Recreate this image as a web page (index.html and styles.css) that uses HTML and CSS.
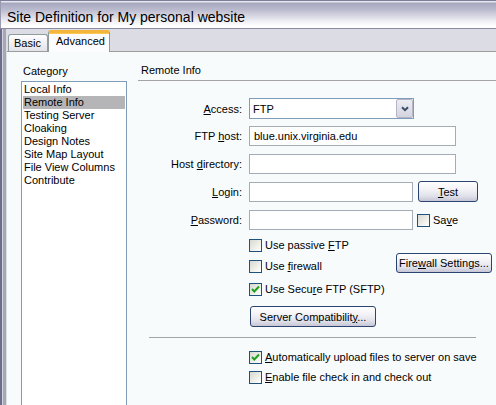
FILE: index.html
```html
<!DOCTYPE html>
<html>
<head>
<meta charset="utf-8">
<link rel="stylesheet" href="styles.css">
</head>
<body>
<div class="window">
  <div class="titlebar">Site Definition for My personal website</div>
  <div class="frame">
    <div class="tabs">
      <div class="tab">Basic</div>
      <div class="tab active">Advanced</div>
    </div>
    <div class="panel">
      <div class="side">
        <div class="side-label">Category</div>
        <ul class="listbox">
          <li>Local Info</li>
          <li class="sel">Remote Info</li>
          <li>Testing Server</li>
          <li>Cloaking</li>
          <li>Design Notes</li>
          <li>Site Map Layout</li>
          <li>File View Columns</li>
          <li>Contribute</li>
        </ul>
      </div>
      <div class="main">
        <div class="section-title">Remote Info</div>
        <div class="form">
          <div class="row row-access">
            <span class="lbl"><u>A</u>ccess:</span>
            <div class="select"><span>FTP</span><span class="arrow"><svg width="8" height="6" viewBox="0 0 8 6"><path d="M1 1.2 L4 4.2 L7 1.2" fill="none" stroke="#3c4c6c" stroke-width="2"/></svg></span></div>
          </div>
          <div class="row row-gap7">
            <span class="lbl">FTP <u>h</u>ost:</span>
            <input class="input wide" type="text" value="blue.unix.virginia.edu">
          </div>
          <div class="row row-gap8">
            <span class="lbl">Host <u>d</u>irectory:</span>
            <input class="input wide" type="text" value="">
          </div>
          <div class="row row-gap8">
            <span class="lbl"><u>L</u>ogin:</span>
            <input class="input narrow" type="text" value="">
            <button class="btn btn-test"><u>T</u>est</button>
          </div>
          <div class="row row-gap8">
            <span class="lbl"><u>P</u>assword:</span>
            <input class="input narrow" type="text" value="">
            <span class="cb cb-save"></span><span class="cbtext">Sa<u>v</u>e</span>
          </div>
          <div class="cbrow cb-passive">
            <span class="cb"></span><span class="cbtext">Use passive <u>F</u>TP</span>
          </div>
          <div class="cbrow cb-firewall">
            <span class="cb"></span><span class="cbtext">Use <u>f</u>irewall</span>
            <button class="btn btn-firewall">Fire<u>w</u>all Settings...</button>
          </div>
          <div class="cbrow cb-secure">
            <span class="cb checked"><svg width="11" height="11" viewBox="0 0 11 11"><path d="M2 5 L4.3 7.5 L9 2.5" fill="none" stroke="#21a121" stroke-width="2"/></svg></span><span class="cbtext">Use Secu<u>r</u>e FTP (SFTP)</span>
          </div>
          <button class="btn btn-compat">Server Compatibilit<u>y</u>...</button>
          <div class="separator"></div>
          <div class="cbrow cb-auto">
            <span class="cb checked"><svg width="11" height="11" viewBox="0 0 11 11"><path d="M2 5 L4.3 7.5 L9 2.5" fill="none" stroke="#21a121" stroke-width="2"/></svg></span><span class="cbtext"><u>A</u>utomatically upload files to server on save</span>
          </div>
          <div class="cbrow cb-enable">
            <span class="cb"></span><span class="cbtext"><u>E</u>nable file check in and check out</span>
          </div>
        </div>
      </div>
    </div>
  </div>
</div>
</body>
</html>
```

FILE: styles.css
```css
html, body {
  margin: 0;
  padding: 0;
}
body {
  width: 496px;
  height: 405px;
  overflow: hidden;
  font-family: "Liberation Sans", Arial, sans-serif;
  font-size: 11px;
  color: #000;
  background: #f8fbfc;
}
.window {
  display: flex;
  flex-direction: column;
  height: 405px;
}
.titlebar {
  height: 29px;
  box-sizing: border-box;
  border-top: 1px solid #7e7e9a;
  border-bottom: 1px solid #8a8aa2;
  background: linear-gradient(#e6e6ee 0, #e6e6ee 1px, #a6a6be 2px, #bcbcd0 9px, #eeeef4 20px, #ffffff 25px);
  box-shadow: inset 1px 0 #9a9ab0;
  padding: 6px 0 0 7px;
  font-size: 14px;
  line-height: 20px;
  white-space: nowrap;
}
.frame {
  flex: 1;
  display: flex;
  flex-direction: column;
  background: #dcdce4;
  box-shadow: inset 2px 0 #6c6c8c, inset 3px 0 #d4d4de, inset 6px 0 #a8a8b4;
  padding-left: 7px;
  min-height: 0;
}
.tabs {
  height: 22px;
  display: flex;
  align-items: flex-end;
  padding-left: 1px;
  border-bottom: 1px solid #9c9c9c;
}
.tab {
  box-sizing: border-box;
  width: 40px;
  height: 17px;
  padding: 2px 0 0 5px;
  line-height: 13px;
  border: 1px solid #919b9c;
  border-bottom: none;
  border-radius: 3px 3px 0 0;
  background: linear-gradient(#ffffff, #f0f0f4 50%, #e2e2ea);
  white-space: nowrap;
}
.tab.active {
  width: 62px;
  height: 22px;
  margin-bottom: -1px;
  padding: 2px 0 0 7px;
  border-top: 3px solid #f4b63c;
  border-left-color: #919b9c;
  background: #fcfcfe;
  box-shadow: inset 0 1px 0 #ffc850;
}
.panel {
  flex: 1;
  display: flex;
  background: #f8fbfc;
  min-height: 0;
  overflow: hidden;
}
.side {
  flex: none;
  padding: 13px 0 0 14px;
}
.side-label {
  line-height: 13px;
  padding-left: 2px;
}
.listbox {
  list-style: none;
  margin: 3px 0 0 0;
  padding: 1px;
  box-sizing: border-box;
  width: 106px;
  height: 400px;
  border: 1px solid #7f9db9;
  background: #ffffff;
}
.listbox li {
  line-height: 13px;
  height: 13px;
  padding-left: 1px;
  white-space: nowrap;
}
.listbox li.sel {
  background: #b5b5b8;
}
.main {
  flex: 1;
  margin-left: 11px;
  min-width: 0;
}
.section-title {
  padding: 12px 0 3px 3px;
  line-height: 13px;
  border-bottom: 1px solid #a4a4a4;
  white-space: nowrap;
}
.form {
  margin-top: 17px;
  display: flex;
  flex-direction: column;
  align-items: flex-start;
}
.row {
  display: flex;
  align-items: center;
  height: 20px;
}
.row-access {
  height: 21px;
}
.row-gap7 {
  margin-top: 7px;
}
.row-gap8 {
  margin-top: 8px;
}
.lbl {
  flex: none;
  width: 104px;
  margin-right: 7px;
  text-align: right;
  white-space: nowrap;
}
.select {
  box-sizing: border-box;
  width: 165px;
  height: 21px;
  border: 1px solid #7f9db9;
  background: #ffffff;
  display: flex;
  align-items: center;
  padding-left: 3px;
}
.arrow {
  margin-left: auto;
  box-sizing: border-box;
  width: 17px;
  height: 19px;
  border: 1px solid #b4b4c6;
  border-radius: 2px;
  background: linear-gradient(#ececf2, #d4d4e0);
  display: flex;
  align-items: center;
  justify-content: center;
}
.input {
  box-sizing: border-box;
  height: 20px;
  margin: 0;
  border: 1px solid #a5acb5;
  background: #ffffff;
  font: inherit;
  color: #000;
  padding: 0 4px;
  outline: none;
}
.input.wide {
  width: 207px;
}
.input.narrow {
  width: 164px;
}
.btn {
  box-sizing: border-box;
  height: 21px;
  padding: 0;
  margin: 0;
  border: 1px solid #2c4470;
  border-radius: 3px;
  background: linear-gradient(#ffffff, #f4f4f8 35%, #e0e0ea 75%, #c6c6d6);
  font: inherit;
  color: #000;
  white-space: nowrap;
  text-align: center;
}
.btn-test {
  width: 60px;
  margin-left: 5px;
  margin-top: -1px;
}
.btn-firewall {
  width: 96px;
  height: 20px;
  margin-left: auto;
}
.btn-compat {
  width: 126px;
  margin-top: 10px;
  margin-left: 112px;
}
.cb {
  flex: none;
  box-sizing: border-box;
  width: 13px;
  height: 13px;
  border: 1px solid #1c5180;
  background: linear-gradient(135deg, #d8d8d2, #f4f4f0 70%, #ffffff);
  margin-right: 3px;
  display: flex;
  align-items: center;
  justify-content: center;
}
.cb-save {
  margin-left: 4px;
}
.cbtext {
  line-height: 13px;
  white-space: nowrap;
}
.cbrow {
  display: flex;
  align-items: center;
  height: 13px;
  margin-left: 111px;
}
.cb-passive {
  margin-top: 9px;
}
.cb-firewall {
  margin-top: 1px;
  height: 20px;
  width: 243px;
  align-items: flex-end;
}
.cb-secure {
  margin-top: 10px;
}
.separator {
  margin-top: 10px;
  margin-left: 11px;
  width: 327px;
  height: 0;
  border-top: 1px solid #a4a4a4;
}
.cb-auto {
  margin-top: 13px;
}
.cb-enable {
  margin-top: 7px;
}
```
